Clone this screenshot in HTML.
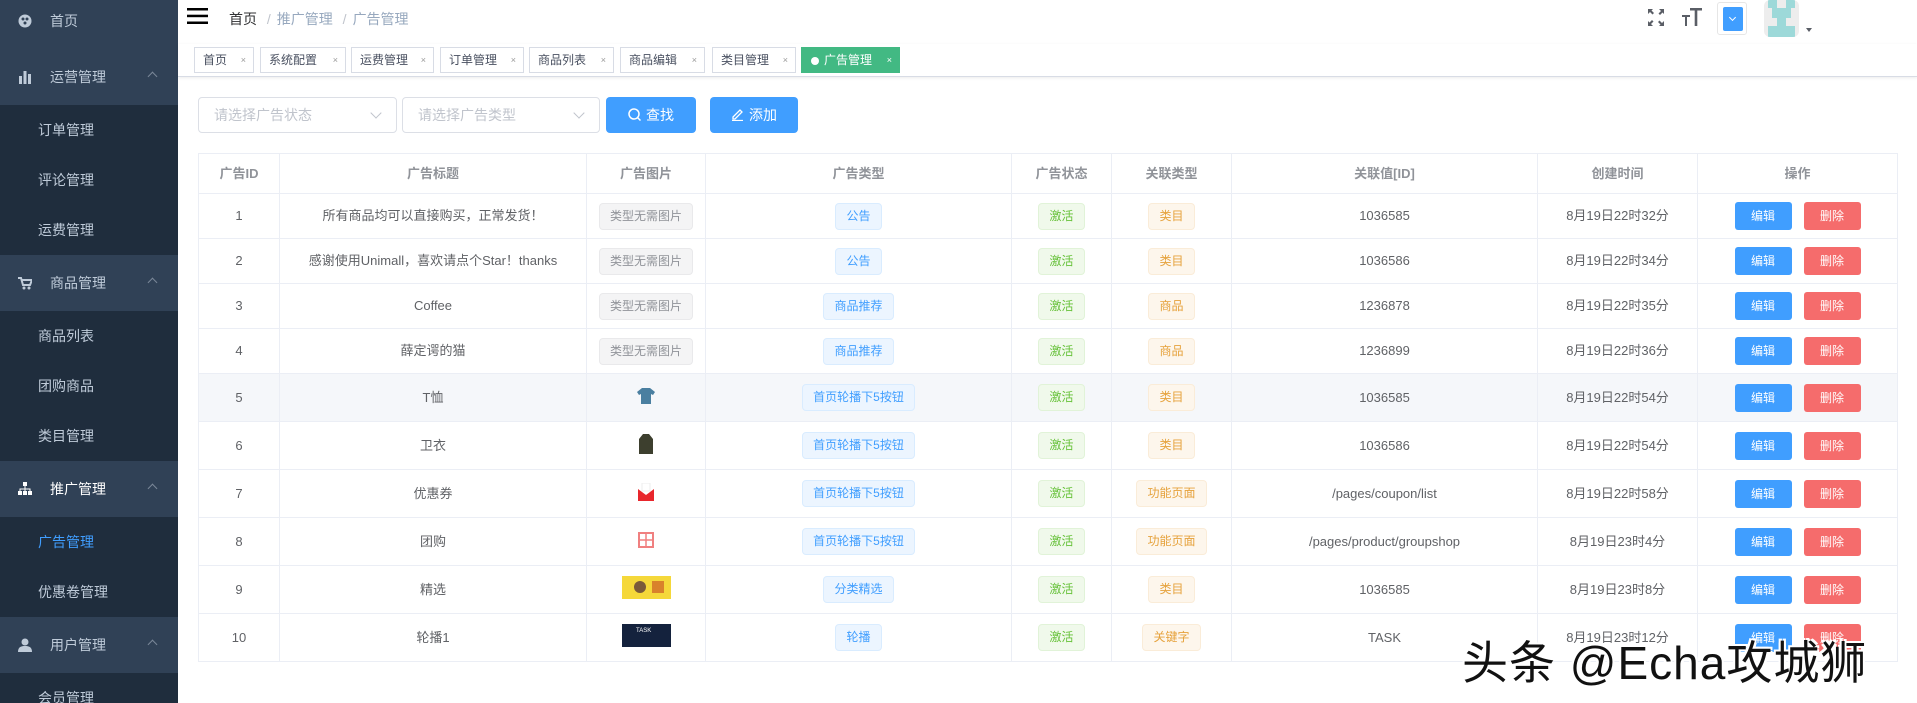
<!DOCTYPE html>
<html><head><meta charset="utf-8">
<style>
*{box-sizing:border-box;margin:0;padding:0}
body{width:1917px;height:703px;overflow:hidden;font-family:"Liberation Sans","Noto Sans CJK SC",sans-serif;background:#fff;position:relative;color:#606266}
#side{position:absolute;left:0;top:0;width:178px;height:703px;background:#1f2d3d;overflow:hidden}
#side .in{position:absolute;top:-7px;left:0;width:178px}
.g{height:56px;background:#304156;color:#bfcbd9;font-size:14px;line-height:56px;padding-left:50px;position:relative}
.g .ic{position:absolute;left:18px;top:21px;width:14px;height:14px}
.g .ar{position:absolute;right:22px;top:24px;width:7px;height:7px;border-left:1px solid #7a8798;border-top:1px solid #7a8798;transform:rotate(45deg)}
.it{height:50px;line-height:50px;color:#bfcbd9;font-size:14px;padding-left:38px}
.it.act{color:#409eff}
#nav{position:absolute;left:178px;top:0;right:0;height:44px}
#tags{position:absolute;left:178px;top:44px;right:0;height:33px;border-bottom:1px solid #d8dce5;box-shadow:0 1px 3px rgba(0,0,0,.08)}
.tg{position:absolute;top:3px;height:26px;line-height:24px;border:1px solid #d8dce5;font-size:12px;color:#495060;padding-left:8px;background:#fff}
.tg i{font-style:normal;font-size:9px;color:#999;position:absolute;right:7px;top:0}
.tg.on{background:#42b983;border-color:#42b983;color:#fff;padding-left:22px}
.tg.on:before{content:"";position:absolute;left:9px;top:9px;width:8px;height:8px;border-radius:50%;background:#fff}
.tg.on i{color:#fff}
.sel{position:absolute;top:97px;height:36px;border:1px solid #dcdfe6;border-radius:4px;font-size:14px;color:#c0c4cc;line-height:34px;padding-left:15px}
.sel:after{content:"";position:absolute;right:16px;top:11px;width:7px;height:7px;border-right:1px solid #c0c4cc;border-bottom:1px solid #c0c4cc;transform:rotate(45deg)}
.btn{position:absolute;top:97px;height:36px;background:#409eff;border-radius:4px;color:#fff;font-size:14px;line-height:36px;text-align:center}
table{position:absolute;left:198px;top:153px;border-collapse:collapse;table-layout:fixed;width:1699px;font-size:13px}
td,th{border:1px solid #ebeef5;text-align:center;color:#606266;font-weight:normal;padding:0;line-height:16px;vertical-align:middle}
th{height:40px;color:#909399;font-weight:bold;font-size:13px}
tr.a td{height:45px}
tr.b td{height:48px}
tr.h td{background:#f5f7fa}
.t{display:inline-block;height:27px;line-height:25px;padding:0 10px;border:1px solid;border-radius:4px;font-size:12px;vertical-align:middle}
.gy{background:#f4f4f5;border-color:#e9e9eb;color:#909399}
.bl{background:#ecf5ff;border-color:#d9ecff;color:#409eff}
.gn{background:#f0f9eb;border-color:#e1f3d8;color:#67c23a}
.or{background:#fdf6ec;border-color:#faecd8;color:#e6a23c}
.ob{display:inline-block;width:57px;height:28px;line-height:28px;color:#fff;border-radius:3px;font-size:12px;margin:0 6px;vertical-align:middle}
.e{background:#409eff}.d{background:#f56c6c}
#wm{position:absolute;left:1462px;top:627px;font-size:46px;color:#111;white-space:nowrap;text-shadow:2px 2px 0 #fff,-2px -2px 0 #fff,2px -2px 0 #fff,-2px 2px 0 #fff;letter-spacing:1px}
</style></head><body>
<div id="side"><div class="in">
<div class="g" style="background:#304156"><svg class="ic" viewBox="0 0 14 14"><circle cx="7" cy="7" r="6.5" fill="#bfcbd9"/><circle cx="5" cy="5" r="1.5" fill="#304156"/><circle cx="9" cy="5" r="1.5" fill="#304156"/><circle cx="7" cy="9" r="1.5" fill="#304156"/></svg>首页</div>
<div class="g"><svg class="ic" viewBox="0 0 14 14"><rect x="1" y="6" width="3" height="8" fill="#bfcbd9"/><rect x="5.5" y="1" width="3" height="13" fill="#bfcbd9"/><rect x="10" y="4" width="3" height="10" fill="#bfcbd9"/></svg>运营管理<span class="ar"></span></div>
<div class="it">订单管理</div><div class="it">评论管理</div><div class="it">运费管理</div>
<div class="g"><svg class="ic" viewBox="0 0 14 14"><path d="M0 2h3l2 7h7l2-5H4" fill="none" stroke="#bfcbd9" stroke-width="2"/><circle cx="6" cy="12" r="1.5" fill="#bfcbd9"/><circle cx="11" cy="12" r="1.5" fill="#bfcbd9"/></svg>商品管理<span class="ar"></span></div>
<div class="it">商品列表</div><div class="it">团购商品</div><div class="it">类目管理</div>
<div class="g"><svg class="ic" viewBox="0 0 14 14"><rect x="5" y="0" width="4" height="4" fill="#fff"/><rect x="0" y="9" width="4" height="4" fill="#fff"/><rect x="5" y="9" width="4" height="4" fill="#fff"/><rect x="10" y="9" width="4" height="4" fill="#fff"/><path d="M7 4v5M2 9V7h10v2" stroke="#fff" fill="none"/></svg><span style="color:#fff">推广管理</span><span class="ar"></span></div>
<div class="it act">广告管理</div><div class="it">优惠卷管理</div>
<div class="g"><svg class="ic" viewBox="0 0 14 14"><circle cx="7" cy="4" r="3.5" fill="#bfcbd9"/><path d="M0 14c0-5 3-6 7-6s7 1 7 6z" fill="#bfcbd9"/></svg>用户管理<span class="ar"></span></div>
<div class="it">会员管理</div>
</div></div>

<div id="nav">
<svg style="position:absolute;left:9px;top:8px" width="21" height="16" viewBox="0 0 21 16"><rect y="0" width="21" height="2.5" fill="#000"/><rect y="6.7" width="21" height="2.5" fill="#000"/><rect y="13.5" width="21" height="2.5" fill="#000"/></svg>
<div style="position:absolute;left:51px;top:9px;font-size:14px;color:#303133">首页 <span style="color:#c0c4cc;margin:0 6px">/</span><span style="color:#97a8be">推广管理</span> <span style="color:#c0c4cc;margin:0 6px">/</span><span style="color:#97a8be">广告管理</span></div>
<svg style="position:absolute;left:1470px;top:9px" width="16" height="17" viewBox="0 0 16 17" fill="#5a5e66"><path d="M0 0h5l-1.5 1.5 2.5 2.5-1.5 1.5-2.5-2.5L0 5z M16 0v5l-1.5-1.5-2.5 2.5-1.5-1.5 2.5-2.5L11 0z M0 17v-5l1.5 1.5 2.5-2.5 1.5 1.5-2.5 2.5L5 17z M16 17h-5l1.5-1.5-2.5-2.5 1.5-1.5 2.5 2.5L16 12z"/></svg>
<svg style="position:absolute;left:1504px;top:7px" width="20" height="20" viewBox="0 0 20 20" fill="#5a5e66"><rect x="8" y="1" width="12" height="2.5"/><rect x="12.7" y="1" width="2.6" height="18"/><rect x="0" y="8" width="8" height="2"/><rect x="3" y="8" width="2" height="11"/></svg>
<div style="position:absolute;left:1539px;top:2px;width:30px;height:33px;border:1px solid #e6e6e6;border-radius:3px"><div style="position:absolute;left:5px;top:4px;width:20px;height:24px;background:#409eff;border-radius:2px"></div><div style="position:absolute;left:12px;top:12px;width:5px;height:5px;border-right:1px solid #fff;border-bottom:1px solid #fff;transform:rotate(45deg)"></div></div>
<div style="position:absolute;left:1586px;top:0;width:35px;height:37px;background:#ededed;border-radius:6px;overflow:hidden"><div style="position:absolute;left:4px;top:0;width:9px;height:8px;background:#9dd9d9"></div><div style="position:absolute;left:22px;top:0;width:9px;height:8px;background:#9dd9d9"></div><div style="position:absolute;left:8px;top:8px;width:19px;height:10px;background:#9dd9d9"></div><div style="position:absolute;left:13px;top:18px;width:9px;height:8px;background:#9dd9d9"></div><div style="position:absolute;left:4px;top:26px;width:27px;height:11px;background:#9dd9d9"></div></div>
<div style="position:absolute;left:1628px;top:28px;border:3px solid transparent;border-top:4px solid #5a5e66"></div>
</div>

<div id="tags">
<div class="tg" style="left:16px;width:60px">首页<i>×</i></div>
<div class="tg" style="left:82px;width:86px">系统配置<i>×</i></div>
<div class="tg" style="left:173px;width:83px">运费管理<i>×</i></div>
<div class="tg" style="left:262px;width:84px">订单管理<i>×</i></div>
<div class="tg" style="left:351px;width:85px">商品列表<i>×</i></div>
<div class="tg" style="left:442px;width:85px">商品编辑<i>×</i></div>
<div class="tg" style="left:534px;width:84px">类目管理<i>×</i></div>
<div class="tg on" style="left:623px;width:99px">广告管理<i>×</i></div>
</div>

<div class="sel" style="left:198px;width:199px">请选择广告状态</div>
<div class="sel" style="left:402px;width:198px">请选择广告类型</div>
<div class="btn" style="left:606px;width:90px"><svg width="13" height="13" viewBox="0 0 13 13" style="vertical-align:-1px;margin-right:5px"><circle cx="6" cy="6" r="5" fill="none" stroke="#fff" stroke-width="1.5"/><path d="M9.5 9.5l3 3" stroke="#fff" stroke-width="1.5"/></svg>查找</div>
<div class="btn" style="left:710px;width:88px"><svg width="13" height="13" viewBox="0 0 13 13" style="vertical-align:-1px;margin-right:5px"><path d="M2 9l7-7 2 2-7 7H2z M1 12.5h11" fill="none" stroke="#fff" stroke-width="1.3"/></svg>添加</div>

<table>
<colgroup><col style="width:81px"><col style="width:307px"><col style="width:119px"><col style="width:306px"><col style="width:100px"><col style="width:120px"><col style="width:306px"><col style="width:160px"><col style="width:200px"></colgroup>
<tr><th>广告ID</th><th>广告标题</th><th>广告图片</th><th>广告类型</th><th>广告状态</th><th>关联类型</th><th>关联值[ID]</th><th>创建时间</th><th>操作</th></tr>
<tr class="a"><td>1</td><td>所有商品均可以直接购买，正常发货！</td><td><span class="t gy">类型无需图片</span></td><td><span class="t bl">公告</span></td><td><span class="t gn">激活</span></td><td><span class="t or">类目</span></td><td>1036585</td><td>8月19日22时32分</td><td><span class="ob e">编辑</span><span class="ob d">删除</span></td></tr>
<tr class="a"><td>2</td><td>感谢使用Unimall，喜欢请点个Star！thanks</td><td><span class="t gy">类型无需图片</span></td><td><span class="t bl">公告</span></td><td><span class="t gn">激活</span></td><td><span class="t or">类目</span></td><td>1036586</td><td>8月19日22时34分</td><td><span class="ob e">编辑</span><span class="ob d">删除</span></td></tr>
<tr class="a"><td>3</td><td>Coffee</td><td><span class="t gy">类型无需图片</span></td><td><span class="t bl">商品推荐</span></td><td><span class="t gn">激活</span></td><td><span class="t or">商品</span></td><td>1236878</td><td>8月19日22时35分</td><td><span class="ob e">编辑</span><span class="ob d">删除</span></td></tr>
<tr class="a"><td>4</td><td>薛定谔的猫</td><td><span class="t gy">类型无需图片</span></td><td><span class="t bl">商品推荐</span></td><td><span class="t gn">激活</span></td><td><span class="t or">商品</span></td><td>1236899</td><td>8月19日22时36分</td><td><span class="ob e">编辑</span><span class="ob d">删除</span></td></tr>
<tr class="b h"><td>5</td><td>T恤</td><td><svg width="18" height="16" viewBox="0 0 18 16"><path d="M5 0h8l5 4-2 3-2-1v10H4V6L2 7 0 4z" fill="#4a7fa0"/></svg></td><td><span class="t bl">首页轮播下5按钮</span></td><td><span class="t gn">激活</span></td><td><span class="t or">类目</span></td><td>1036585</td><td>8月19日22时54分</td><td><span class="ob e">编辑</span><span class="ob d">删除</span></td></tr>
<tr class="b"><td>6</td><td>卫衣</td><td><svg width="14" height="20" viewBox="0 0 14 20"><path d="M4 0h6l4 5v15H0V5z" fill="#3d3f2e"/></svg></td><td><span class="t bl">首页轮播下5按钮</span></td><td><span class="t gn">激活</span></td><td><span class="t or">类目</span></td><td>1036586</td><td>8月19日22时54分</td><td><span class="ob e">编辑</span><span class="ob d">删除</span></td></tr>
<tr class="b"><td>7</td><td>优惠券</td><td><svg width="16" height="18" viewBox="0 0 16 18"><rect x="4" y="0" width="8" height="8" fill="#fff" stroke="#eee"/><path d="M0 6l8 6 8-6v12H0z" fill="#e8262c"/></svg></td><td><span class="t bl">首页轮播下5按钮</span></td><td><span class="t gn">激活</span></td><td><span class="t or">功能页面</span></td><td>/pages/coupon/list</td><td>8月19日22时58分</td><td><span class="ob e">编辑</span><span class="ob d">删除</span></td></tr>
<tr class="b"><td>8</td><td>团购</td><td><svg width="16" height="16" viewBox="0 0 16 16"><rect x="1" y="1" width="14" height="14" fill="none" stroke="#f08080" stroke-width="2"/><path d="M8 1v14M1 8h14" stroke="#f08080" stroke-width="1.5"/></svg></td><td><span class="t bl">首页轮播下5按钮</span></td><td><span class="t gn">激活</span></td><td><span class="t or">功能页面</span></td><td>/pages/product/groupshop</td><td>8月19日23时4分</td><td><span class="ob e">编辑</span><span class="ob d">删除</span></td></tr>
<tr class="b"><td>9</td><td>精选</td><td><svg width="49" height="23" viewBox="0 0 49 23"><rect width="49" height="23" fill="#f5d83a"/><circle cx="18" cy="11" r="6" fill="#7a5a3a"/><rect x="30" y="5" width="12" height="12" fill="#d9822b"/></svg></td><td><span class="t bl">分类精选</span></td><td><span class="t gn">激活</span></td><td><span class="t or">类目</span></td><td>1036585</td><td>8月19日23时8分</td><td><span class="ob e">编辑</span><span class="ob d">删除</span></td></tr>
<tr class="b"><td>10</td><td>轮播1</td><td><svg width="49" height="23" viewBox="0 0 49 23"><rect width="49" height="23" fill="#14223d"/><text x="14" y="8" font-size="6" fill="#fff" font-family="Liberation Sans">TASK</text></svg></td><td><span class="t bl">轮播</span></td><td><span class="t gn">激活</span></td><td><span class="t or">关键字</span></td><td>TASK</td><td>8月19日23时12分</td><td><span class="ob e">编辑</span><span class="ob d">删除</span></td></tr>
</table>
<div id="wm">头条 @Echa攻城狮</div>
</body></html>
